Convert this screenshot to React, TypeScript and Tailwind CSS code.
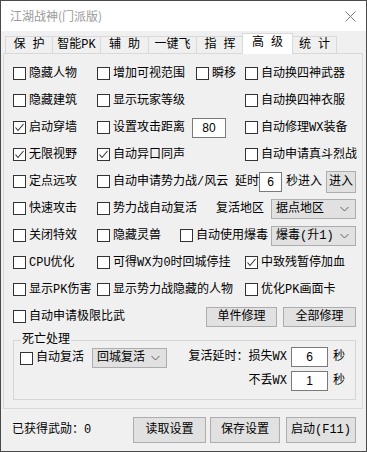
import React from "react";

const Check = ({ checked }: { checked?: boolean }) => (
  <span className="w-[13px] h-[13px] shrink-0 border border-[#333333] bg-white flex items-center justify-center">
    {checked && (
      <svg width="11" height="11" viewBox="0 0 11 11">
        <polyline points="1.5,5.5 4,8.5 9.5,2" fill="none" stroke="#333333" strokeWidth="1.1" />
      </svg>
    )}
  </span>
);

const Cb = ({ label, checked, className = "" }: { label: string; checked?: boolean; className?: string }) => (
  <div className={"flex items-center gap-[3px] shrink-0 whitespace-nowrap " + className}>
    <Check checked={checked} />
    <span>{label}</span>
  </div>
);

const Num = ({ value, className = "" }: { value: string; className?: string }) => (
  <div
    className={
      "h-[20px] shrink-0 border border-[#7a7a7a] bg-white flex items-center justify-center font-['Liberation_Sans',sans-serif] text-[12px] " +
      className
    }
  >
    {value}
  </div>
);

const Btn = ({ label, className = "" }: { label: string; className?: string }) => (
  <div
    className={
      "shrink-0 border border-[#adadad] bg-[#e1e1e1] flex items-center justify-center whitespace-nowrap " + className
    }
  >
    {label}
  </div>
);

const Select = ({ value, className = "" }: { value: string; className?: string }) => (
  <div
    className={
      "h-[20px] shrink-0 border border-[#adadad] bg-[#e1e1e1] flex items-center justify-between pl-[4px] pr-[6px] whitespace-nowrap " +
      className
    }
  >
    <span>{value}</span>
    <svg width="9" height="6" viewBox="0 0 9 6">
      <polyline points="0.5,1 4.5,5 8.5,1" fill="none" stroke="#606060" strokeWidth="1" />
    </svg>
  </div>
);

const tabs = [
  { label: "保 护", w: "w-[48px]" },
  { label: "智能PK", w: "w-[49px]" },
  { label: "辅 助", w: "w-[49px]" },
  { label: "一键飞", w: "w-[49px]" },
  { label: "指 挥", w: "w-[48px]" },
];

export default function App() {
  return (
    <div className="w-[367px] h-[452px] border border-[#4a4a4a] bg-[#f0f0f0] flex flex-col text-[12px] leading-[14px] text-black font-[family-name:'Liberation_Mono','Noto_Sans_CJK_SC',monospace]">
      {/* title bar */}
      <div className="h-[30px] shrink-0 bg-white flex items-center justify-between pl-[9px] pr-[10px]">
        <span className="text-[#9a9a9a] font-[family-name:'Noto_Sans_CJK_SC',sans-serif]">江湖战神(门派版)</span>
        <svg width="11" height="11" viewBox="0 0 11 11">
          <path d="M0.5 0.5 L10.5 10.5 M10.5 0.5 L0.5 10.5" stroke="#7a7a7a" strokeWidth="1" />
        </svg>
      </div>

      {/* tabs */}
      <div className="h-[22px] shrink-0 flex items-end pl-[4px] relative z-10">
        {tabs.map((t) => (
          <div
            key={t.label}
            className={"h-[17px] -ml-px first:ml-0 border border-b-0 border-[#d9d9d9] bg-[#f0f0f0] flex items-center justify-center whitespace-nowrap " + t.w}
          >
            {t.label}
          </div>
        ))}
        <div className="w-[51px] h-[21px] -ml-[2px] -mb-px border border-b-0 border-[#d9d9d9] bg-white flex items-start justify-center pt-[2px] whitespace-nowrap relative z-10">
          高 级
        </div>
        <div className="w-[45px] h-[17px] -ml-px border border-b-0 border-[#d9d9d9] bg-[#f0f0f0] flex items-center justify-center whitespace-nowrap">
          统 计
        </div>
      </div>

      {/* panel */}
      <div className="ml-[2px] w-[360px] h-[356px] shrink-0 border border-[#d9d9d9] pt-[6px] flex flex-col">
        <div className="h-[27px] flex items-center pl-[9px]">
          <Cb label="隐藏人物" className="w-[84px]" />
          <Cb label="增加可视范围" className="w-[99px]" />
          <Cb label="瞬移" className="w-[49px]" />
          <Cb label="自动换四神武器" />
        </div>
        <div className="h-[27px] flex items-center pl-[9px]">
          <Cb label="隐藏建筑" className="w-[84px]" />
          <Cb label="显示玩家等级" className="w-[148px]" />
          <Cb label="自动换四神衣服" />
        </div>
        <div className="h-[27px] flex items-center pl-[9px]">
          <Cb label="启动穿墙" checked className="w-[84px]" />
          <Cb label="设置攻击距离" className="w-[95px]" />
          <Num value="80" className="w-[34px]" />
          <Cb label="自动修理WX装备" className="ml-[19px]" />
        </div>
        <div className="h-[27px] flex items-center pl-[9px]">
          <Cb label="无限视野" checked className="w-[84px]" />
          <Cb label="自动异口同声" checked className="w-[148px]" />
          <Cb label="自动申请真斗烈战" />
        </div>
        <div className="h-[27px] flex items-center pl-[9px]">
          <Cb label="定点远攻" className="w-[84px]" />
          <Cb label="自动申请势力战/风云" className="w-[138px]" />
          <span className="w-[24px] shrink-0 whitespace-nowrap">延时</span>
          <Num value="6" className="w-[23px]" />
          <span className="ml-[4px] w-[40px] shrink-0 whitespace-nowrap">秒进入</span>
          <Btn label="进入" className="w-[30px] h-[22px]" />
        </div>
        <div className="h-[27px] flex items-center pl-[9px]">
          <Cb label="快速攻击" className="w-[84px]" />
          <Cb label="势力战自动复活" className="w-[119px]" />
          <span className="w-[55px] shrink-0 whitespace-nowrap">复活地区</span>
          <Select value="据点地区" className="w-[85px]" />
        </div>
        <div className="h-[27px] flex items-center pl-[9px]">
          <Cb label="关闭特效" className="w-[84px]" />
          <Cb label="隐藏灵兽" className="w-[83px]" />
          <Cb label="自动使用爆毒" className="w-[91px]" />
          <Select value="爆毒(升1)" className="w-[85px]" />
        </div>
        <div className="h-[27px] flex items-center pl-[9px]">
          <Cb label="CPU优化" className="w-[84px]" />
          <Cb label="可得WX为0时回城停挂" className="w-[148px]" />
          <Cb label="中致残暂停加血" checked />
        </div>
        <div className="h-[27px] flex items-center pl-[9px]">
          <Cb label="显示PK伤害" className="w-[84px]" />
          <Cb label="显示势力战隐藏的人物" className="w-[148px]" />
          <Cb label="优化PK画面卡" />
        </div>
        <div className="h-[27px] flex items-center pl-[9px]">
          <Cb label="自动申请极限比武" className="w-[193px]" />
          <Btn label="单件修理" className="w-[71px] h-[20px]" />
          <Btn label="全部修理" className="w-[73px] h-[20px] ml-[6px]" />
        </div>

        <fieldset className="ml-[9px] mt-[3px] w-[343px] h-[67px] border border-[#d5d5d5]">
          <legend className="ml-[7px] px-[1px]">死亡处理</legend>
          <div className="flex">
            <div className="flex items-center h-[20px] pl-[6px] mt-[1px]">
              <Cb label="自动复活" className="w-[72px]" />
              <Select value="回城复活" className="w-[75px]" />
            </div>
            <div className="ml-auto pr-[10px] flex flex-col gap-[4px]">
              <div className="flex items-center h-[20px]">
                <span className="w-[100px] text-right whitespace-nowrap">复活延时：损失WX</span>
                <Num value="6" className="w-[37px] ml-[4px]" />
                <span className="ml-[5px]">秒</span>
              </div>
              <div className="flex items-center h-[20px]">
                <span className="w-[100px] text-right whitespace-nowrap">不丢WX</span>
                <Num value="1" className="w-[37px] ml-[4px]" />
                <span className="ml-[5px]">秒</span>
              </div>
            </div>
          </div>
        </fieldset>
      </div>

      {/* status */}
      <div className="flex-1 flex items-center pl-[11px] pr-[9px]">
        <span className="w-[121px] shrink-0">已获得武勋：0</span>
        <Btn label="读取设置" className="w-[73px] h-[26px]" />
        <Btn label="保存设置" className="w-[70px] h-[26px] ml-[4px]" />
        <Btn label="启动(F11)" className="w-[70px] h-[26px] ml-[6px]" />
      </div>
    </div>
  );
}
